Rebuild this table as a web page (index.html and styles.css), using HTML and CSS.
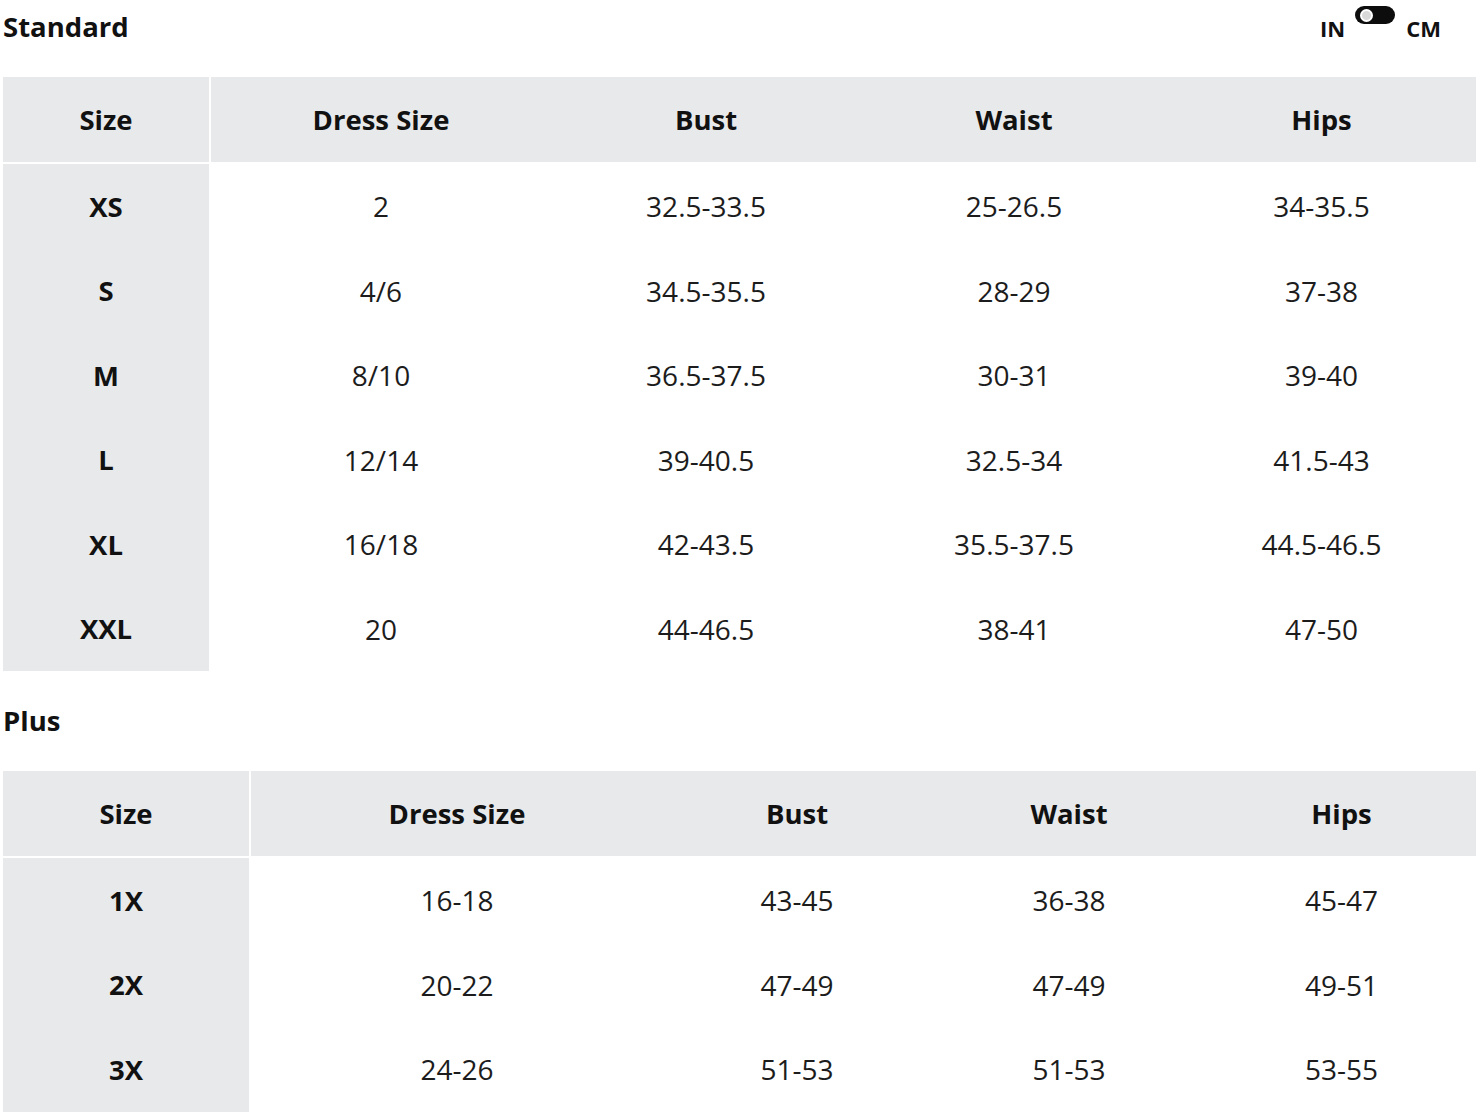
FILE: index.html
```html
<!DOCTYPE html>
<html lang="en">
<head>
<meta charset="utf-8">
<title>Size Chart</title>
<link rel="stylesheet" href="styles.css">
</head>
<body>
<div class="page">
  <div class="topbar">
    <h2 class="section-title">Standard</h2>
    <div class="unit-toggle">
      <span class="unit">IN</span>
      <span class="switch"><span class="knob"></span></span>
      <span class="unit">CM</span>
    </div>
  </div>
  <table class="chart chart-standard">
    <colgroup>
      <col class="c-size"><col class="c-dress"><col class="c-bust"><col class="c-waist"><col class="c-hips">
    </colgroup>
    <thead>
      <tr><th>Size</th><th>Dress Size</th><th>Bust</th><th>Waist</th><th>Hips</th></tr>
    </thead>
    <tbody>
      <tr><th>XS</th><td>2</td><td>32.5-33.5</td><td>25-26.5</td><td>34-35.5</td></tr>
      <tr><th>S</th><td>4/6</td><td>34.5-35.5</td><td>28-29</td><td>37-38</td></tr>
      <tr><th>M</th><td>8/10</td><td>36.5-37.5</td><td>30-31</td><td>39-40</td></tr>
      <tr><th>L</th><td>12/14</td><td>39-40.5</td><td>32.5-34</td><td>41.5-43</td></tr>
      <tr><th>XL</th><td>16/18</td><td>42-43.5</td><td>35.5-37.5</td><td>44.5-46.5</td></tr>
      <tr><th>XXL</th><td>20</td><td>44-46.5</td><td>38-41</td><td>47-50</td></tr>
    </tbody>
  </table>
  <h2 class="section-title plus-title">Plus</h2>
  <table class="chart chart-plus">
    <colgroup>
      <col class="p-size"><col class="p-dress"><col class="p-bust"><col class="p-waist"><col class="p-hips">
    </colgroup>
    <thead>
      <tr><th>Size</th><th>Dress Size</th><th>Bust</th><th>Waist</th><th>Hips</th></tr>
    </thead>
    <tbody>
      <tr><th>1X</th><td>16-18</td><td>43-45</td><td>36-38</td><td>45-47</td></tr>
      <tr><th>2X</th><td>20-22</td><td>47-49</td><td>47-49</td><td>49-51</td></tr>
      <tr><th>3X</th><td>24-26</td><td>51-53</td><td>51-53</td><td>53-55</td></tr>
    </tbody>
  </table>
</div>
</body>
</html>
```

FILE: styles.css
```css
html, body {
  margin: 0;
  padding: 0;
  background: #ffffff;
}

body {
  font-family: "Open Sans", "Liberation Sans", sans-serif;
  color: #1a1a1a;
}

.page {
  padding: 0 4px 0 3px;
}

.topbar {
  height: 77px;
  display: flex;
  justify-content: space-between;
  align-items: flex-start;
}

.section-title {
  margin: 0;
  font-size: 27.5px;
  font-weight: 700;
  color: #111;
  line-height: 54px;
}

.plus-title {
  line-height: 100px;
  height: 100px;
}

.unit-toggle {
  display: flex;
  align-items: flex-start;
  margin-right: 35px;
  padding-top: 6px;
}

.unit {
  font-size: 22px;
  font-weight: 700;
  color: #111;
  line-height: 20px;
  margin-top: 12px;
}

.switch {
  width: 40px;
  height: 18px;
  border-radius: 9px;
  background: #0d0d0d;
  margin: 0 11px 0 10px;
  display: flex;
  align-items: center;
  padding-left: 5px;
  box-sizing: border-box;
}

.knob {
  width: 9px;
  height: 9px;
  border-radius: 50%;
  background: #d9d9d9;
  border: 2px solid #ffffff;
}

.chart {
  width: 1473px;
  border-collapse: separate;
  border-spacing: 0;
  table-layout: fixed;
}

.chart th,
.chart td {
  padding: 0;
  text-align: center;
  vertical-align: middle;
  font-size: 27.5px;
}

.chart thead th {
  height: 85px;
  background: #e8e9eb;
  font-weight: 700;
  color: #111;
  border-bottom: 2px solid #ffffff;
}

.chart thead th:first-child {
  border-right: 2px solid #ffffff;
}

.chart tbody th {
  background: #e8e9eb;
  font-weight: 700;
  color: #111;
  border-right: 2px solid #ffffff;
}

.chart tbody td {
  font-weight: 400;
  color: #1c1c1c;
  font-size: 28px;
}

.chart-standard tbody tr {
  height: 84.5px;
}

.chart-plus tbody tr {
  height: 84.5px;
}

.c-size { width: 208px; }
.c-dress { width: 340px; }
.c-bust { width: 310px; }
.c-waist { width: 306px; }
.c-hips { width: 309px; }

.p-size { width: 248px; }
.p-dress { width: 412px; }
.p-bust { width: 268px; }
.p-waist { width: 276px; }
.p-hips { width: 269px; }
```
